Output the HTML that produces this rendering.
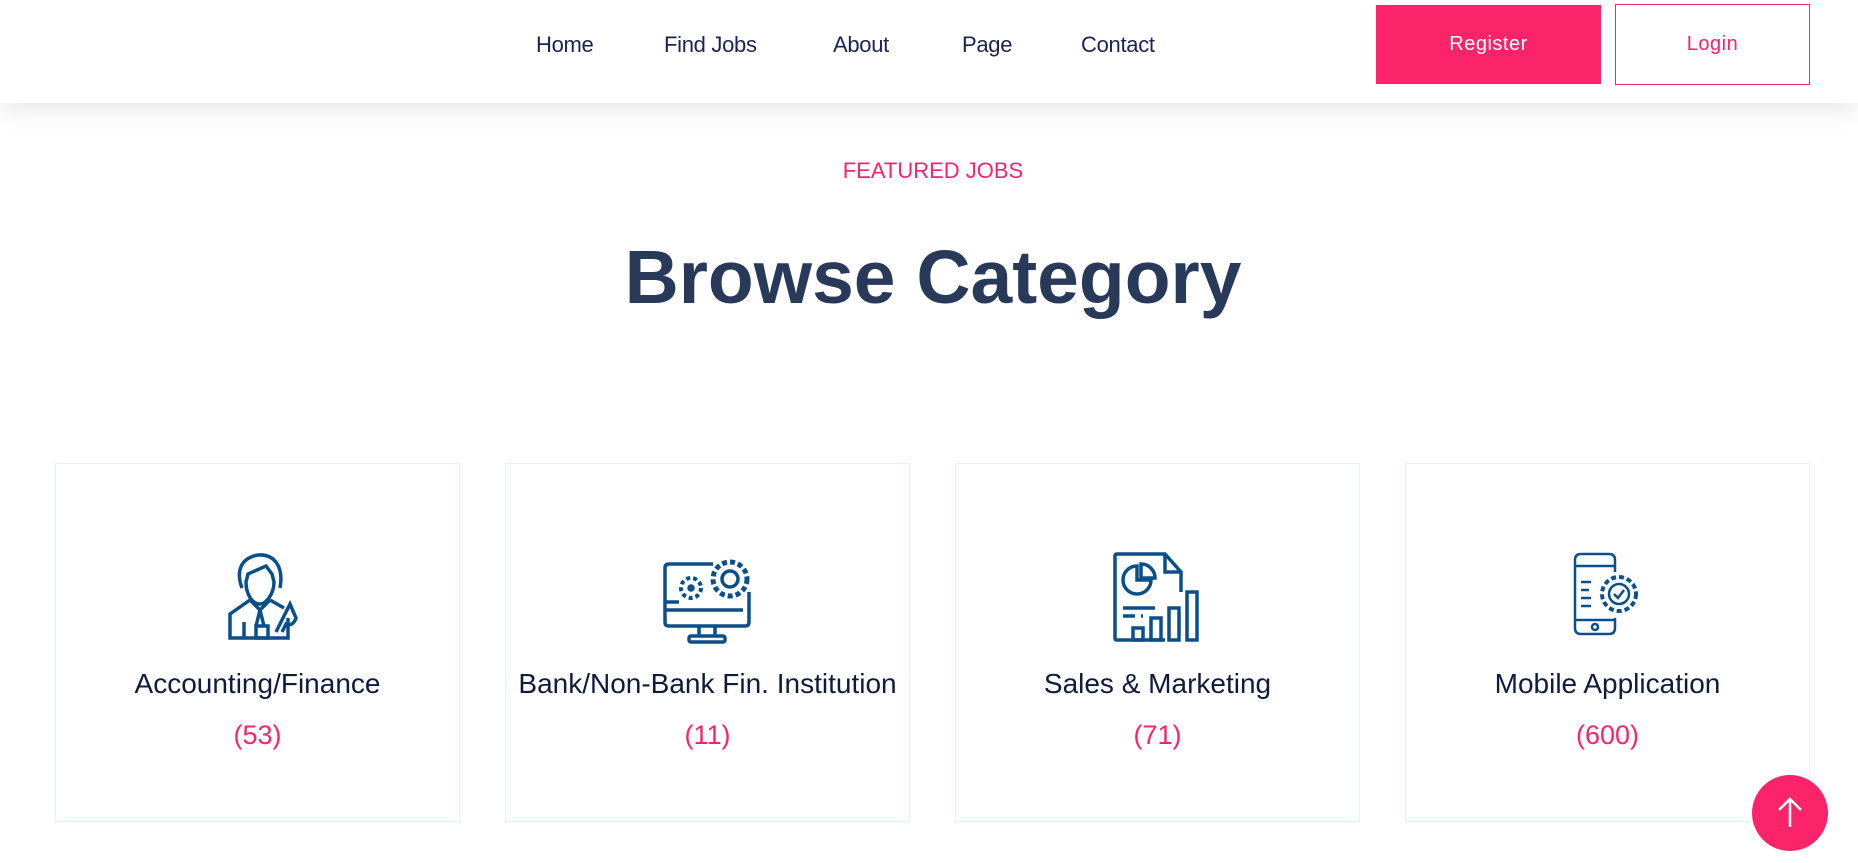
<!DOCTYPE html>
<html><head><meta charset="utf-8"><style>
*{margin:0;padding:0;box-sizing:border-box}
html,body{width:1858px;height:863px;overflow:hidden;background:#fff;font-family:"Liberation Sans",sans-serif}
.nav{position:absolute;left:0;top:0;width:1858px;height:103px;background:#fff;box-shadow:0 8px 22px rgba(0,0,0,0.09);z-index:2}
.nav a{position:absolute;top:32px;font-size:22px;color:#1c2254;text-decoration:none;letter-spacing:-0.3px}
.btn{position:absolute;display:flex;align-items:center;justify-content:center;font-size:20px;letter-spacing:0.5px}
.reg{left:1376px;top:5px;width:225px;height:79px;background:#fb246a;color:#fff}
.log{left:1615px;top:4px;width:195px;height:81px;border:1px solid #fb246a;color:#fb246a}
.feat{position:absolute;top:158px;width:1858px;left:4px;text-align:center;font-size:22px;color:#fb246a}
.h1{position:absolute;top:234px;width:1858px;left:4px;text-align:center;font-size:75px;font-weight:bold;color:#28395a}
.card{position:absolute;top:463px;width:405px;height:359px;border:1px solid #dcf6f4;text-align:center}
.card svg{position:absolute;left:50%;top:88px;transform:translateX(-50%)}
.card .t{position:absolute;top:204px;width:100%;font-size:28px;color:#0f1b3d}
.card .c{position:absolute;top:256px;width:100%;font-size:27px;color:#fb246a}
.up{position:absolute;left:1752px;top:775px;width:76px;height:76px;border-radius:50%;background:#fb246a}
</style></head><body>
<div class="nav">
<a style="left:536px">Home</a><a style="left:664px">Find Jobs</a><a style="left:833px">About</a><a style="left:962px">Page</a><a style="left:1081px">Contact</a>
<div class="btn reg">Register</div><div class="btn log">Login</div>
</div>
<div class="feat">FEATURED JOBS</div>
<div class="h1">Browse Category</div>

<div class="card" style="left:55px">
<svg width="72" height="88" viewBox="0 0 72 88" fill="none" stroke="#0b4f8a" stroke-width="3.5" style="margin-left:6px">
<path d="M14 36 C8 20 12 6 30 3 C46 2 56 14 52 36"/><path d="M20 22 L38 14 L44 22 L46 30 C46 42 38 52 32 52 C24 52 18 42 18 30Z"/><path d="M22 48 L2 62 V86 H60 V66"/><path d="M42 48 L56 56"/><path d="M22 48 L32 58 L42 48"/><path d="M32 58 L28 74 M32 58 L36 74"/><rect x="28" y="74" width="12" height="12"/><path d="M16 70 V86"/><path d="M48 80 L62 52 L68 66 C66 72 62 74 58 72 L54 80"/></svg>
<div class="t">Accounting/Finance</div><div class="c">(53)</div></div>

<div class="card" style="left:505px">
<svg width="90" height="92" viewBox="0 0 90 92" fill="none" stroke="#0b4f8a" stroke-width="3.5">
<path d="M50 12 H6 Q2 12 2 16 V70 Q2 74 6 74 H82 Q86 74 86 70 V40"/><path d="M2 58 H80"/><path d="M36 74 V84 M52 74 V84"/><rect x="26" y="84" width="36" height="6" rx="2"/>
<circle cx="67" cy="27" r="17" stroke-dasharray="5 3" stroke-width="5"/><circle cx="67" cy="27" r="8"/>
<circle cx="28" cy="36" r="10" stroke-dasharray="4 3" stroke-width="4"/><circle cx="28" cy="36" r="2"/>
<path d="M2 50 H16"/></svg>
<div class="t">Bank/Non-Bank Fin. Institution</div><div class="c">(11)</div></div>

<div class="card" style="left:955px">
<svg width="90" height="92" viewBox="0 0 90 92" fill="none" stroke="#0b4f8a" stroke-width="3.5">
<path d="M52 88 H4 Q2 88 2 86 V4 Q2 2 4 2 H52 L68 20 V40"/><path d="M52 2 V20 H68"/><path d="M24 14 A14 14 0 1 0 38 28 H24Z"/><path d="M28 12 A14 14 0 0 1 42 26 H28Z"/><path d="M10 56 H42 M10 64 H22 M28 64 H30"/>
<rect x="20" y="76" width="10" height="12"/><rect x="38" y="66" width="10" height="22"/><rect x="56" y="56" width="10" height="32"/><rect x="74" y="40" width="10" height="48"/></svg>
<div class="t">Sales &amp; Marketing</div><div class="c">(71)</div></div>

<div class="card" style="left:1405px">
<svg width="70" height="84" viewBox="0 0 70 84" fill="none" stroke="#0b4f8a" stroke-width="2.5">
<path d="M42 20 V8 Q42 2 36 2 H8 Q2 2 2 8 V76 Q2 82 8 82 H36 Q42 82 42 76 V66"/><path d="M2 14 H42 M2 68 H42"/><circle cx="22" cy="75" r="3"/>
<path d="M8 30 H18 M8 38 H16 M8 46 H18 M8 54 H18"/>
<circle cx="46" cy="42" r="17" stroke-dasharray="5 3" stroke-width="4"/><circle cx="46" cy="42" r="10"/><path d="M41 42 L45 46 L51 38"/></svg>
<div class="t">Mobile Application</div><div class="c">(600)</div></div>

<div class="up"><svg width="76" height="76" viewBox="0 0 76 76" fill="none" stroke="#fff" stroke-width="2.5"><path d="M38 52 V24 M27 35 L38 24 L49 35"/></svg></div>
</body></html>
